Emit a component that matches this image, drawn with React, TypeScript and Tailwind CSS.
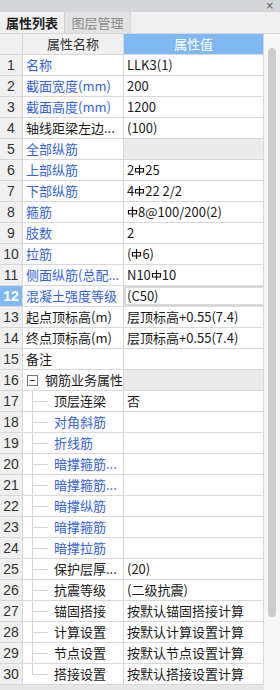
import React from "react";

type Row = {
  name: string;
  value?: string;
  blue?: boolean;
  child?: boolean;
  group?: boolean;
  grayValue?: boolean;
};

const rows: Row[] = [
  { name: "名称", value: "LLK3(1)", blue: true },
  { name: "截面宽度(mm)", value: "200", blue: true },
  { name: "截面高度(mm)", value: "1200", blue: true },
  { name: "轴线距梁左边...", value: "(100)" },
  { name: "全部纵筋", blue: true, grayValue: true },
  { name: "上部纵筋", value: "2\u534025", blue: true },
  { name: "下部纵筋", value: "4\u534022 2/2", blue: true },
  { name: "箍筋", value: "\u53408@100/200(2)", blue: true },
  { name: "肢数", value: "2", blue: true },
  { name: "拉筋", value: "(\u53406)", blue: true },
  { name: "侧面纵筋(总配...", value: "N10\u534010", blue: true },
  { name: "混凝土强度等级", value: "(C50)", blue: true },
  { name: "起点顶标高(m)", value: "层顶标高+0.55(7.4)" },
  { name: "终点顶标高(m)", value: "层顶标高+0.55(7.4)" },
  { name: "备注" },
  { name: "钢筋业务属性", group: true, grayValue: true },
  { name: "顶层连梁", value: "否", child: true },
  { name: "对角斜筋", blue: true, child: true },
  { name: "折线筋", blue: true, child: true },
  { name: "暗撑箍筋...", blue: true, child: true },
  { name: "暗撑箍筋...", blue: true, child: true },
  { name: "暗撑纵筋", blue: true, child: true },
  { name: "暗撑箍筋", blue: true, child: true },
  { name: "暗撑拉筋", blue: true, child: true },
  { name: "保护层厚...", value: "(20)", child: true },
  { name: "抗震等级", value: "(二级抗震)", child: true },
  { name: "锚固搭接", value: "按默认锚固搭接计算", child: true },
  { name: "计算设置", value: "按默认计算设置计算", child: true },
  { name: "节点设置", value: "按默认节点设置计算", child: true },
  { name: "搭接设置", value: "按默认搭接设置计算", child: true },
];

const SELECTED = 12;

// 钢筋符号 (HRB400) — 用 "卍" 占位再替换成小字形
function Value({ text }: { text: string }) {
  const parts = text.split("\u5340");
  return (
    <>
      {parts.map((p, i) => (
        <React.Fragment key={i}>
          {i > 0 && (
            <span className="relative inline-block w-[11px] h-[12px] align-[-1px]">
              <svg viewBox="0 0 11 12" className="absolute inset-0 w-[11px] h-[12px]">
                <path d="M1.5 4.5h8v3.5h-8z M5.5 1v10" fill="none" stroke="#111" strokeWidth="1.2" />
              </svg>
            </span>
          )}
          {p}
        </React.Fragment>
      ))}
    </>
  );
}

export default function App() {
  const font = { fontFamily: '"Noto Sans CJK SC", "Liberation Sans", sans-serif' };
  return (
    <div className="w-[280px] h-[690px] bg-[#f0f0f0] overflow-hidden flex flex-col text-[13px] text-[#1a1a1a]" style={font}>
      {/* 标题栏 */}
      <div className="h-[12px] bg-[#d5d6da] flex items-center justify-end pr-[6px]">
        <span className="text-[10px] leading-none text-[#555]" style={{ fontFamily: '"DejaVu Sans", sans-serif' }}>×</span>
      </div>

      {/* 标签页 */}
      <div className="h-[22px] flex border-b border-[#d8d8d8]">
        <div className="w-[64px] flex items-center justify-center font-bold text-[#222] bg-[#f0f0f0]">属性列表</div>
        <div className="w-[66px] flex items-center justify-center text-[#8a8a8a] bg-[#e2e2e2] border-l border-[#d0d0d0]">图层管理</div>
        <div className="flex-1 border-l border-[#d8d8d8]" />
      </div>

      <div className="flex flex-1 min-h-0">
        {/* 表格 */}
        <div className="w-[264px] flex flex-col">
          <div className="h-[21px] flex border-b border-[#d8d8d8]">
            <div className="w-[23px] border-r border-[#d8d8d8] bg-[#f0f0f0]" />
            <div className="w-[101px] flex items-center justify-center text-[#333] bg-[#f0f0f0] border-r border-[#d8d8d8]">属性名称</div>
            <div className="w-[140px] flex items-center justify-center text-white bg-[#7fb8f5] border-r border-[#c8d8ea]">属性值</div>
          </div>

          {rows.map((r, i) => {
            const n = i + 1;
            const sel = n === SELECTED;
            const last = n === rows.length;
            return (
              <div key={n} className="h-[21px] flex border-b border-[#d8d8d8]">
                <div
                  className={`w-[23px] flex items-center justify-center border-r border-[#d8d8d8] ${
                    sel ? "bg-[#80b8f2] text-white font-bold" : "bg-[#f0f0f0] text-[#333]"
                  }`}
                  style={{ fontFamily: '"Liberation Sans", sans-serif', fontSize: 14 }}
                >
                  {n}
                </div>
                <div className="w-[101px] relative flex items-center bg-white border-r border-[#d8d8d8] whitespace-nowrap overflow-hidden">
                  {r.child && (
                    <>
                      <div className={`absolute left-[9px] top-[-1px] w-px bg-[#d4d4d4] ${last ? "h-[12px]" : "h-[22px]"}`} />
                      <div className="absolute left-[9px] top-[10px] w-[16px] h-px bg-[#d4d4d4]" />
                    </>
                  )}
                  {r.group ? (
                    <div className="flex items-center pl-[4px] gap-[7px]">
                      <span className="w-[11px] h-[11px] border border-[#777] flex items-center justify-center bg-white">
                        <span className="w-[5px] h-px bg-[#333]" />
                      </span>
                      <span>{r.name}</span>
                    </div>
                  ) : (
                    <span className={`${r.child ? "pl-[31px]" : "pl-[3px]"} ${r.blue ? "text-[#3563d9]" : "text-[#1a1a1a]"}`}>
                      {r.name}
                    </span>
                  )}
                </div>
                <div
                  className={`w-[140px] flex items-center whitespace-nowrap overflow-hidden border-r border-[#d8d8d8] ${
                    r.grayValue ? "bg-[#ebebeb]" : "bg-white"
                  } ${sel ? "border-2 border-[#7a7a7a] pl-[1px]" : "pl-[3px]"}`}
                >
                  {r.value && <Value text={r.value} />}
                </div>
              </div>
            );
          })}
          <div className="flex-1 bg-[#e6e6e6]" />
        </div>

        {/* 滚动条 */}
        <div className="flex-1 bg-[#f7f7f7] pt-[14px] pl-[4px] pr-[4px]">
          <div className="h-[569px] bg-[#cdcdcd] rounded-t-[4px] rounded-b-[4px]" />
        </div>
      </div>
    </div>
  );
}
